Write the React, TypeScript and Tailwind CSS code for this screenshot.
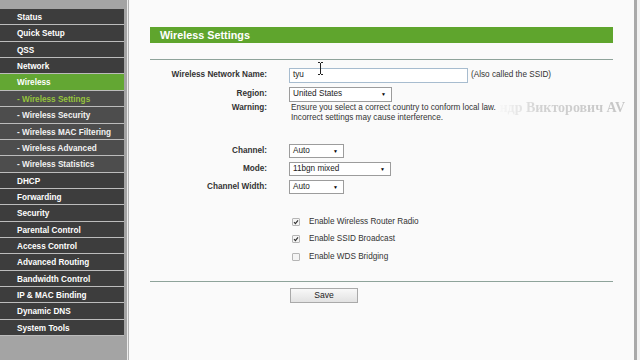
import React from "react";

type Item = { t: string; kind: "main" | "active" | "sub" | "subcur" };

const items: Item[] = [
  { t: "Status", kind: "main" },
  { t: "Quick Setup", kind: "main" },
  { t: "QSS", kind: "main" },
  { t: "Network", kind: "main" },
  { t: "Wireless", kind: "active" },
  { t: "- Wireless Settings", kind: "subcur" },
  { t: "- Wireless Security", kind: "sub" },
  { t: "- Wireless MAC Filtering", kind: "sub" },
  { t: "- Wireless Advanced", kind: "sub" },
  { t: "- Wireless Statistics", kind: "sub" },
  { t: "DHCP", kind: "main" },
  { t: "Forwarding", kind: "main" },
  { t: "Security", kind: "main" },
  { t: "Parental Control", kind: "main" },
  { t: "Access Control", kind: "main" },
  { t: "Advanced Routing", kind: "main" },
  { t: "Bandwidth Control", kind: "main" },
  { t: "IP & MAC Binding", kind: "main" },
  { t: "Dynamic DNS", kind: "main" },
  { t: "System Tools", kind: "main" },
];

const kindClass: Record<Item["kind"], string> = {
  main: "bg-[#3d3d3d] text-white",
  active: "bg-[#63a733] text-white",
  sub: "bg-[#4d4d4d] text-[#f2f2f2]",
  subcur: "bg-[#4d4d4d] text-[#95c43c]",
};

function Select({ value, w }: { value: string; w: string }) {
  return (
    <div
      className={`${w} h-full flex items-center justify-between border border-[#9c9c9c] bg-white pl-[3px] pr-[5px] text-[8.2px] text-[#222]`}
    >
      <span>{value}</span>
      <span className="text-[5px] leading-none text-black">▼</span>
    </div>
  );
}

function Label({ children }: { children: React.ReactNode }) {
  return (
    <div className="text-right font-bold text-[8.2px] text-[#333] leading-none flex items-center justify-end">
      {children}
    </div>
  );
}

function Check({ on, label }: { on: boolean; label: string }) {
  return (
    <div className="h-[17.5px] flex items-center">
      <div className="ml-[3px] w-[8px] h-[8px] border border-[#b5b5b5] bg-[#f4f4f4] rounded-[1px] flex items-center justify-center">
        {on && (
          <svg width="6" height="6" viewBox="0 0 6 6">
            <path d="M1 3.2 L2.4 4.6 L5 1.3" stroke="#333" strokeWidth="1.2" fill="none" />
          </svg>
        )}
      </div>
      <span className="ml-[9px] text-[8.2px] text-[#333]">{label}</span>
    </div>
  );
}

export default function App() {
  return (
    <div className="w-[640px] h-[360px] flex overflow-hidden bg-[#fafafa] font-['Liberation_Sans',Arial,sans-serif]">
      {/* Sidebar */}
      <div className="w-[127px] shrink-0 bg-[#a4a4a4] pt-[9px] flex flex-col">
        {items.map((it) => (
          <div
            key={it.t}
            className={`w-[124px] h-[16.37px] border-b-[1.37px] border-[#bcbcbc] pl-[17px] pt-[3px] font-bold text-[8.2px] leading-[12px] whitespace-nowrap ${kindClass[it.kind]}`}
          >
            {it.t}
          </div>
        ))}
      </div>
      <div className="w-px shrink-0 bg-[#ededed]" />
      <div className="w-px shrink-0 bg-[#b2b2b2]" />

      {/* Content */}
      <div className="relative w-[505px] shrink-0 pl-[21px] pt-[27px]">
        <div className="w-[463px] h-[16px] bg-[#5fa52d] flex items-center pl-[10px]">
          <span className="text-white font-bold text-[10.8px] leading-none">Wireless Settings</span>
        </div>
        <div className="w-[463px] h-px bg-[#8ea39a] mt-[16px]" />

        <div className="grid grid-cols-[117px_1fr] gap-x-[22px] mt-[8px]">
          <div className="h-[15px] flex items-center justify-end">
            <Label>Wireless Network Name:</Label>
          </div>
          <div className="h-[15px] flex items-center">
            <div className="w-[179px] h-full border border-[#a7bccf] bg-white pl-[3px] flex items-center text-[8.2px] text-[#222]">
              tyu
            </div>
            <span className="ml-[3px] text-[8.2px] text-[#333]">(Also called the SSID)</span>
          </div>

          <div className="h-[15px] mt-[4px] flex items-center justify-end">
            <Label>Region:</Label>
          </div>
          <div className="h-[15px] mt-[4px]">
            <Select value="United States" w="w-[103px]" />
          </div>

          <div className="h-[10px] mt-[1px] flex items-center justify-end">
            <Label>Warning:</Label>
          </div>
          <div className="mt-[1px] pl-[2px] text-[8.2px] leading-[10px] text-[#333]">
            <div>Ensure you select a correct country to conform local law.</div>
            <div>Incorrect settings may cause interference.</div>
          </div>

          <div className="h-[14px] mt-[21px] flex items-center justify-end">
            <Label>Channel:</Label>
          </div>
          <div className="h-[14px] mt-[21px]">
            <Select value="Auto" w="w-[55px]" />
          </div>

          <div className="h-[14px] mt-[4px] flex items-center justify-end">
            <Label>Mode:</Label>
          </div>
          <div className="h-[14px] mt-[4px]">
            <Select value="11bgn mixed" w="w-[102px]" />
          </div>

          <div className="h-[14px] mt-[4px] flex items-center justify-end">
            <Label>Channel Width:</Label>
          </div>
          <div className="h-[14px] mt-[4px]">
            <Select value="Auto" w="w-[55px]" />
          </div>

          <div className="mt-[19px]" />
          <div className="mt-[19px] flex flex-col">
            <Check on label="Enable Wireless Router Radio" />
            <Check on label="Enable SSID Broadcast" />
            <Check on={false} label="Enable WDS Bridging" />
          </div>
        </div>

        <div className="w-[463px] h-px bg-[#8ea39a] mt-[15px]" />
        <div className="mt-[6px] pl-[140px]">
          <div className="w-[68px] h-[15px] border border-[#a9a9a9] bg-linear-to-b from-[#f8f8f8] to-[#e2e2e2] flex items-center justify-center text-[8.6px] text-[#222]">
            Save
          </div>
        </div>

        {/* faint video watermark lying over the page */}
        <div className="absolute right-[9px] top-[101px] font-['Liberation_Serif',serif] font-bold text-[14px] leading-none whitespace-nowrap bg-linear-to-r from-transparent from-[25%] via-[#d2d2d2] to-[#c6c6c6] bg-clip-text text-transparent">
          Александр Викторович AV
        </div>

        {/* text cursor */}
        <svg className="absolute left-[188px] top-[62px]" width="7" height="13" viewBox="0 0 7 13">
          <path d="M1 0.5 H3 M4 0.5 H6 M3.5 1 V12 M1 12.5 H3 M4 12.5 H6" stroke="#222" strokeWidth="1" fill="none" />
        </svg>
      </div>

      <div className="w-[3px] shrink-0 bg-[#a9a9a9]" />
      <div className="w-[3px] shrink-0 bg-[#f2f2f2]" />
    </div>
  );
}
